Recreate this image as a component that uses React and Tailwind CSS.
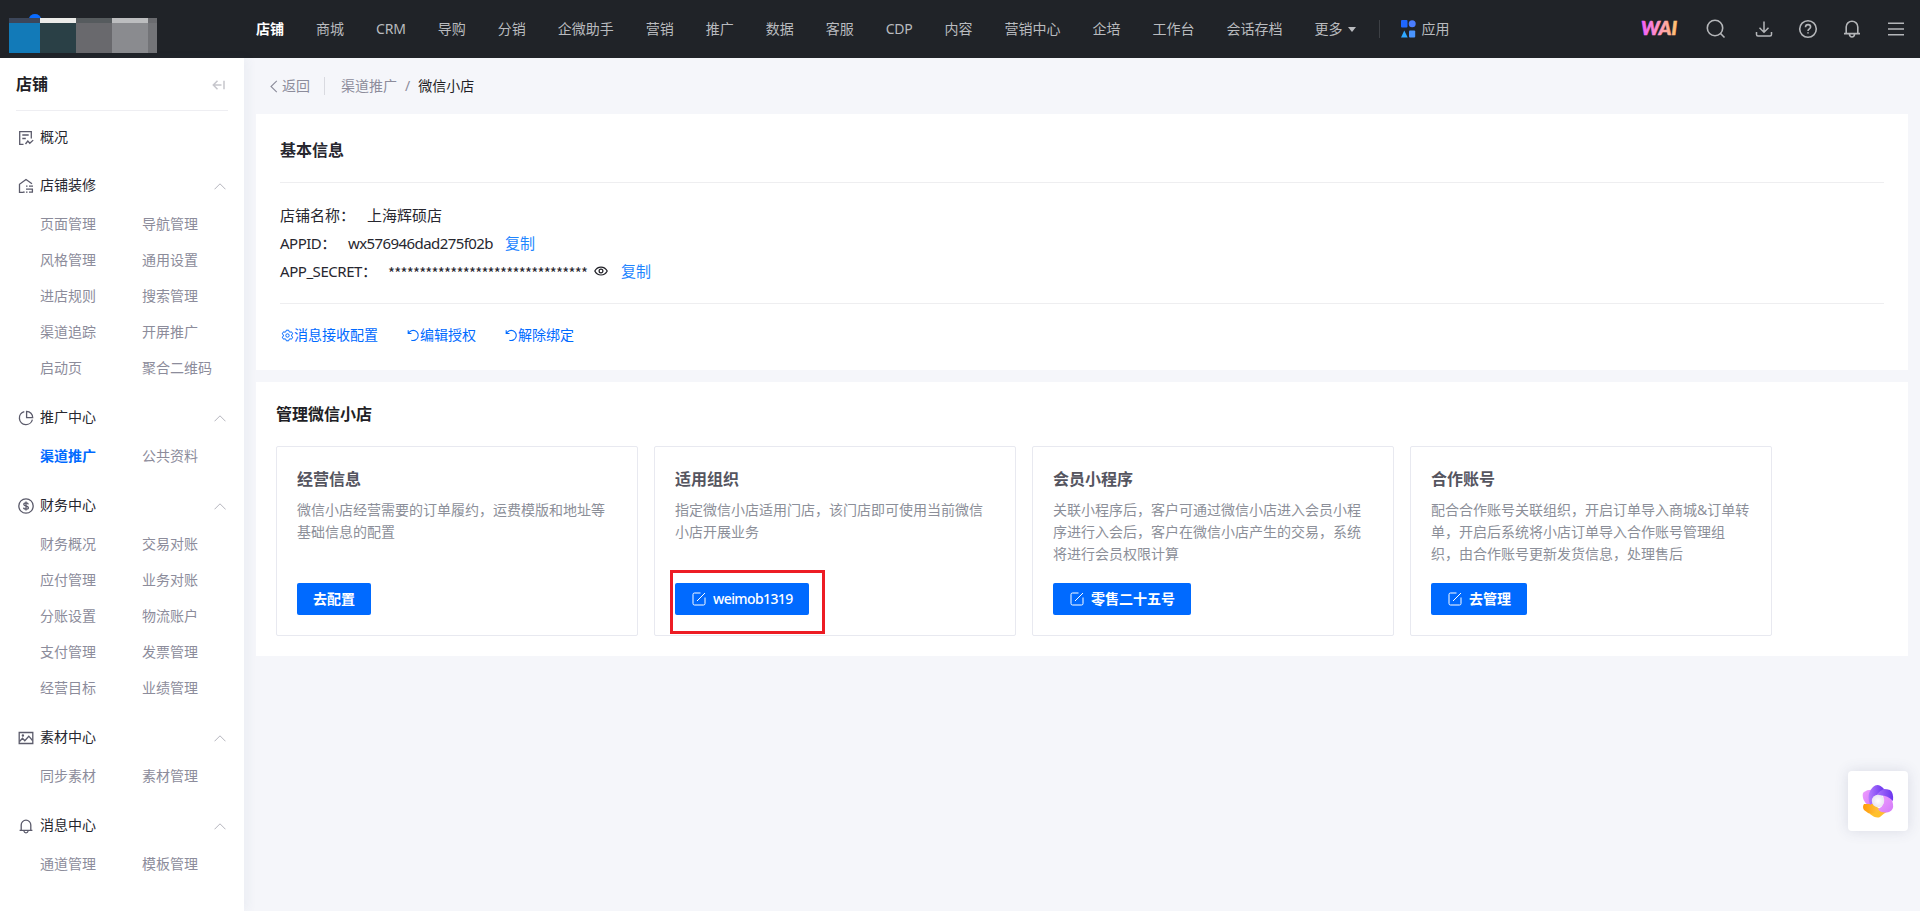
const navItems = [
  "商城",
  "CRM",
  "导购",
  "分销",
  "企微助手",
  "营销",
  "推广",
  "数据",
  "客服",
  "CDP",
  "内容",
  "营销中心",
  "企培",
  "工作台",
  "会话存档",
]

const OverviewIcon = () => (
  <svg width="16" height="16" viewBox="0 0 16 16" fill="none" stroke="#5b5b6b" strokeWidth="1.3">
    <path d="M5.5 14.3H1.7V1.7h11.6v6.8M4.3 5h6.4M4.3 8.5h3.5" />
    <path d="M7.5 14l2.3-3 2 2.3 3.4-3.2" />
  </svg>
)

const HouseIcon = () => (
  <svg width="16" height="16" viewBox="0 0 16 16" fill="none" stroke="#5b5b6b" strokeWidth="1.3">
    <path d="M5.5 14.3H1.5v-1.8V6.3L8 1.5l6 4.3" />
    <path d="M8 8.2h1.5M11 8.2h4M8 11.2h7M8 14.2h1.5M11 14.2h4M5 14.2h1.7M14.4 11.2v3" />
  </svg>
)

const PieIcon = () => (
  <svg width="16" height="16" viewBox="0 0 16 16" fill="none" stroke="#5b5b6b" strokeWidth="1.3">
    <path d="M6.3 1.6A6.6 6.6 0 1 0 14.4 9.6" />
    <path d="M8.6 1.3v6.4h6.1A6.3 6.3 0 0 0 8.6 1.3z" />
  </svg>
)

const MoneyIcon = () => (
  <svg width="16" height="16" viewBox="0 0 16 16" fill="none" stroke="#5b5b6b" strokeWidth="1.3">
    <circle cx="8" cy="8" r="7.2" />
    <path d="M10.3 6.3C10.1 5.2 9.2 4.9 8 4.9c-1.3 0-2.2.5-2.2 1.5 0 2.2 4.6 1 4.6 3.3 0 1-1 1.5-2.4 1.5-1.3 0-2.3-.5-2.4-1.6M8 3.5v9" />
  </svg>
)

const PictureIcon = () => (
  <svg width="16" height="16" viewBox="0 0 16 16" fill="none" stroke="#5b5b6b" strokeWidth="1.3">
    <path d="M1.2 2.5h13.6v11H1.2z" />
    <path d="M1.5 11.5l3-3.2 2.3 2.5 4-4.6 3.7 4.3" />
    <circle cx="4.9" cy="5.6" r=".6" />
  </svg>
)

const BellIcon = () => (
  <svg width="16" height="16" viewBox="0 0 16 16" fill="none" stroke="#5b5b6b" strokeWidth="1.3">
    <path d="M3.2 12.3V7A4.8 4.8 0 0 1 12.8 7v5.3" />
    <path d="M1.6 12.4h12.8M5.9 13c.2 1.2 1 1.9 2.1 1.9s1.9-.7 2.1-1.9" />
  </svg>
)

const groups = [
  {
    title: "店铺装修",
    icon: HouseIcon,
    items: [
      "页面管理",
      "导航管理",
      "风格管理",
      "通用设置",
      "进店规则",
      "搜索管理",
      "渠道追踪",
      "开屏推广",
      "启动页",
      "聚合二维码",
    ],
  },
  { title: "推广中心", icon: PieIcon, items: ["渠道推广", "公共资料"] },
  {
    title: "财务中心",
    icon: MoneyIcon,
    items: [
      "财务概况",
      "交易对账",
      "应付管理",
      "业务对账",
      "分账设置",
      "物流账户",
      "支付管理",
      "发票管理",
      "经营目标",
      "业绩管理",
    ],
  },
  { title: "素材中心", icon: PictureIcon, items: ["同步素材", "素材管理"] },
  { title: "消息中心", icon: BellIcon, items: ["通道管理", "模板管理"] },
]

const cards = [
  {
    title: "经营信息",
    lines: ["微信小店经营需要的订单履约，运费模版和地址等", "基础信息的配置"],
    button: "去配置",
  },
  {
    title: "适用组织",
    lines: ["指定微信小店适用门店，该门店即可使用当前微信", "小店开展业务"],
    button: "weimob1319",
    editable: true,
    marked: true,
  },
  {
    title: "会员小程序",
    lines: [
      "关联小程序后，客户可通过微信小店进入会员小程",
      "序进行入会后，客户在微信小店产生的交易，系统",
      "将进行会员权限计算",
    ],
    button: "零售二十五号",
    editable: true,
  },
  {
    title: "合作账号",
    lines: [
      "配合合作账号关联组织，开启订单导入商城&订单转",
      "单，开启后系统将小店订单导入合作账号管理组",
      "织，由合作账号更新发货信息，处理售后",
    ],
    button: "去管理",
    editable: true,
  },
]

const Logo = () => (
  <svg width="148" height="39" viewBox="0 0 148 39" shapeRendering="crispEdges">
    <ellipse cx="26" cy="5" rx="6" ry="5" fill="#0a6cff" shapeRendering="auto" />
    <path fill="#3c465a" d="M0 4h31v5H0z" />
    <path fill="#127ab8" d="M0 9h31v30H0z" />
    <path fill="#ebebe9" d="M31 4h36v5H31z" />
    <path fill="#2a4046" d="M31 9h36v30H31z" />
    <path fill="#565b5e" d="M67 4h36v5H67z" />
    <path fill="#69696d" d="M67 9h36v30H67z" />
    <path fill="#bcbdbf" d="M103 4h36v5h-36z" />
    <path fill="#8a8b8f" d="M103 9h36v30h-36z" />
    <path fill="#6a6b6f" d="M139 4h9v5h-9z" />
    <path fill="#737478" d="M139 9h9v30h-9z" />
  </svg>
)

const Header = () => (
  <header className="flex h-[58px] shrink-0 items-center bg-[#202328] pr-4 pl-[9px] text-sm text-[#b9bbbf]">
    <div className="mt-[9px] w-[247px]">
      <Logo />
    </div>
    <nav className="flex items-center gap-8 whitespace-nowrap">
      <span className="font-bold text-white">店铺</span>
      {navItems.map((item) => (
        <span key={item} className={/[A-Z]/.test(item) ? "tracking-[-0.2px]" : ""}>
          {item}
        </span>
      ))}
      <span className="flex items-center gap-[5px]">
        更多
        <svg width="8" height="5" viewBox="0 0 8 5" fill="#b9bbbf">
          <path d="M0 0h8L4 5z" />
        </svg>
      </span>
    </nav>
    <div className="ml-[23px] h-[18px] w-px bg-[#3d4045]" />
    <div className="ml-[21px] flex items-center gap-1.5">
      <svg width="15" height="18" viewBox="0 0 15 18">
        <rect x="0" y="0" width="6.5" height="7.5" rx="1" fill="#1f66ff" />
        <circle cx="11.2" cy="3.8" r="3.5" fill="#4a7dff" />
        <path d="M3.3 10.5l3.4 7H0z" fill="#2fa8ff" />
        <rect x="8" y="10.5" width="6.2" height="7" rx="1" fill="#4a95ff" />
      </svg>
      应用
    </div>
    <div className="ml-auto flex items-center">
      <svg width="44" height="24" viewBox="0 0 44 24" className="mr-[22px] mb-0.5">
        <defs>
          <linearGradient id="wai" x1="0" y1="0" x2="1" y2="0">
            <stop offset="0" stopColor="#f25cff" />
            <stop offset=".5" stopColor="#ff9ac0" />
            <stop offset="1" stopColor="#ffc46a" />
          </linearGradient>
        </defs>
        <text
          x="1"
          y="19"
          textLength="36"
          lengthAdjust="spacingAndGlyphs"
          fill="url(#wai)"
          stroke="url(#wai)"
          strokeWidth=".6"
          className="font-['Lato'] text-[19px] font-black italic"
        >
          WAI
        </text>
      </svg>
      <svg width="20" height="20" viewBox="0 0 20 20" fill="none" stroke="#b4b6b9" strokeWidth="1.6">
        <circle cx="9" cy="9" r="7.7" />
        <path d="M14.3 14.3l4.2 4.2" />
      </svg>
      <svg className="ml-7" width="20" height="20" viewBox="0 0 20 20" fill="none" stroke="#b4b6b9" strokeWidth="1.5">
        <path d="M2.5 13v2.5q0 1.5 1.5 1.5h12q1.5 0 1.5-1.5V13M10 2.5V13M5.5 8.7l4.5 4.5 4.5-4.5" />
      </svg>
      <svg className="ml-6" width="20" height="20" viewBox="0 0 20 20" fill="none" stroke="#b4b6b9" strokeWidth="1.6">
        <circle cx="10" cy="10" r="8.3" />
        <path d="M7.5 8.2c0-3.6 5.1-3.3 5.1-.3 0 1.9-2.6 1.9-2.6 4M10 13.2v1.4" />
      </svg>
      <svg className="ml-6" width="20" height="20" viewBox="0 0 20 20" fill="none" stroke="#b4b6b9" strokeWidth="1.6">
        <path d="M4.2 14.5V8a5.8 5.8 0 0 1 11.6 0v6.5M2 14.6h16M7.4 15c.2 1.9 1.2 3 2.6 3s2.4-1.1 2.6-3" />
      </svg>
      <svg className="ml-[26px]" width="16" height="16" viewBox="0 0 16 16" stroke="#b4b6b9" strokeWidth="1.6">
        <path d="M0 2.3h16M0 8h16M0 13.7h16" />
      </svg>
    </div>
  </header>
)

const SidebarGroup = ({ group }) => {
  const Icon = group.icon
  return (
    <div className="mb-3">
      <div className="flex h-10 items-center pr-[18px] pl-[18px]">
        <Icon />
        <span className="ml-1.5 flex-1 pb-0.5 text-[#27272f]">{group.title}</span>
        <svg width="12" height="7" viewBox="0 0 12 7" fill="none" stroke="#b5b5bd">
          <path d="M.5 6.3L6 .8l5.5 5.5" />
        </svg>
      </div>
      <div className="grid grid-cols-[102px_102px] pl-10">
        {group.items.map((item) => (
          <span
            key={item}
            className={
              item === "渠道推广"
                ? "h-9 leading-[35px] font-bold text-[#006aff]"
                : "h-9 leading-[35px] text-[#8c8c9b]"
            }
          >
            {item}
          </span>
        ))}
      </div>
    </div>
  )
}

const Sidebar = () => (
  <aside className="z-10 w-[244px] shrink-0 bg-white text-sm shadow-[4px_0_10px_rgba(60,70,110,0.05)]">
    <div className="mx-4 flex h-[53px] items-center justify-between border-b border-[#eeeef2]">
      <h2 className="text-base font-bold text-[#1f1f26]">店铺</h2>
      <svg className="mt-px mr-[3px]" width="13" height="10" viewBox="0 0 13 10" fill="none" stroke="#c6c6cc" strokeWidth="1.5">
        <path d="M5.5 .8L1.3 5l4.2 4.2M1.5 5h8M12 .8v8.4" />
      </svg>
    </div>
    <div className="mt-[7px] mb-2 flex h-10 items-center pl-[18px]">
      <OverviewIcon />
      <span className="ml-1.5 pb-0.5 text-[#27272f]">概况</span>
    </div>
    {groups.map((group) => (
      <SidebarGroup key={group.title} group={group} />
    ))}
  </aside>
)

const Breadcrumb = () => (
  <div className="flex h-14 items-center pl-[14px] text-sm text-[#8c8c9b]">
    <svg width="8" height="13" viewBox="0 0 8 13" fill="none" stroke="#8c8c9b" strokeWidth="1.1">
      <path d="M6.8 .8L1 6.5l5.8 5.7" />
    </svg>
    <span className="ml-1">返回</span>
    <div className="mr-4 ml-[14px] h-[18px] w-px bg-[#d9dae0]" />
    <span>渠道推广</span>
    <span className="mx-2">/</span>
    <span className="text-[#1f1f26]">微信小店</span>
  </div>
)

const UndoIcon = () => (
  <svg className="mt-px ml-px" width="13" height="13" viewBox="0 0 13 13" fill="none" stroke="#006aff" strokeWidth="1.1">
    <path d="M1.2 1.2v3.3h3.3M1.5 4.3A5.1 5.1 0 1 1 4.3 11.2" />
  </svg>
)

const BasicInfo = () => (
  <section className="h-64 bg-white px-6">
    <h3 className="h-[69px] border-b border-[#eeeef0] pt-6 text-base font-bold text-[#27272f]">
      基本信息
    </h3>
    <div className="flex h-[121px] flex-col justify-center border-b border-[#eeeef0] text-[15px] leading-7 text-[#27272f]">
      <div className="flex">
        <span>店铺名称：</span>
        <span className="ml-3">上海辉硕店</span>
      </div>
      <div className="flex">
        <span className="w-[68px]">
          <span className="tracking-[-0.5px]">APPID</span>：
        </span>
        <span className="w-[157px] whitespace-nowrap tracking-[-0.58px]">wx576946dad275f02b</span>
        <a className="text-[#1e85ff]">复制</a>
      </div>
      <div className="flex h-7 items-center">
        <span className="w-[108px] whitespace-nowrap">
          <span className="tracking-[-0.45px]">APP_SECRET</span>：
        </span>
        <span className="w-[206px] pt-[3px] font-['Noto_Sans_CJK_SC'] text-[15px] leading-7 whitespace-nowrap tracking-[-0.78px]">
          ********************************
        </span>
        <svg width="14" height="10" viewBox="0 0 14 10" fill="none" stroke="#1f1f26" strokeWidth="1.2">
          <path d="M.8 5C3.5-.3 10.5-.3 13.2 5 10.5 10.3 3.5 10.3.8 5z" />
          <circle cx="7" cy="5" r="1.9" />
        </svg>
        <a className="ml-[13px] text-[#1e85ff]">复制</a>
      </div>
    </div>
    <div className="flex h-[62px] items-center gap-7 text-sm text-[#006aff]">
      <a className="flex items-center">
        <svg className="mt-px ml-px" width="13" height="13" viewBox="0 0 13 13" fill="none" stroke="#006aff">
          <path d="M5.3 1.2h2.4l.4 1.5.9.5 1.5-.4 1.2 2-1.1 1.2v1l1.1 1.2-1.2 2-1.5-.4-.9.5-.4 1.5H5.3l-.4-1.5-.9-.5-1.5.4-1.2-2L2.400 7V6L1.300 4.800l1.200-2 1.500.4.9-.5z" />
          <circle cx="6.5" cy="6.5" r="1.7" />
        </svg>
        消息接收配置
      </a>
      <a className="flex items-center">
        <UndoIcon />
        编辑授权
      </a>
      <a className="flex items-center">
        <UndoIcon />
        解除绑定
      </a>
    </div>
  </section>
)

const ManageCard = ({ card }) => (
  <div className="flex h-[190px] w-[362px] flex-col rounded-xs border border-[#e8e9f0] px-5 pt-5 pb-5">
    <h4 className="text-base font-bold text-[#55555f]">{card.title}</h4>
    <div className="mt-2 text-sm leading-[22px] whitespace-nowrap text-[#8c8f99]">
      {card.lines.map((line) => (
        <p key={line}>{line}</p>
      ))}
    </div>
    <div className="relative mt-auto self-start">
      <button className="flex h-8 items-center gap-[7px] rounded-xs bg-[#006aff] px-4 text-sm font-bold text-white">
        {card.editable && (
          <svg className="ml-px" width="14" height="14" viewBox="0 0 14 14" fill="none" stroke="white">
            <path d="M8.5 1H2.5Q1 1 1 2.5v9q0 1.5 1.5 1.5h9q1.5 0 1.5-1.5V5.5M5 9l8-8" />
          </svg>
        )}
        <span className={card.marked ? "font-medium tracking-[-0.6px]" : ""}>{card.button}</span>
      </button>
      {card.marked && (
        <div className="absolute -top-[13px] -left-[5px] h-16 w-[155px] border-3 border-[#ed1c24]" />
      )}
    </div>
  </div>
)

const Assistant = () => (
  <div className="absolute right-3 bottom-20 flex size-[60px] items-center justify-center rounded bg-white shadow-[0_0_14px_rgba(60,70,110,0.15)]">
    <svg width="36" height="36" viewBox="-18 -18 36 36">
      <defs>
        <linearGradient id="violet" x1="0" y1="0" x2="1" y2="0">
          <stop offset="0" stopColor="#b57bff" />
          <stop offset="1" stopColor="#6a35ee" />
        </linearGradient>
        <linearGradient id="pink" x1="0" y1="0" x2="1" y2="1">
          <stop offset="0" stopColor="#f09cff" />
          <stop offset="1" stopColor="#d27af8" />
        </linearGradient>
        <linearGradient id="orange" x1="0" y1="0" x2="1" y2="0">
          <stop offset="0" stopColor="#ff9a0a" />
          <stop offset="1" stopColor="#ffca45" />
        </linearGradient>
        <radialGradient id="core">
          <stop offset="0" stopColor="#ffffff" />
          <stop offset="1" stopColor="#e9e4f2" />
        </radialGradient>
      </defs>
      <path fill="url(#pink)" d="M-14-9Q-10-12-4-11L-4 4-8 5Q-14 2-15-3-16-8-14-9z" />
      <path fill="url(#orange)" d="M-14 3L-5 3 3 9-5 14Q-11 12-14 9-16 6-14 3z" />
      <path fill="#ffc02c" d="M-8 13Q2 12 6 3L10 10Q5 13 2 16-2 18-8 13z" />
      <path fill="url(#pink)" d="M5-6Q14-7 15 3 16 9 11 11 3 13 0 8 8 5 5-6z" />
      <path fill="url(#violet)" d="M-4-9Q4-14 12-11 16-8 15 0 8-7-1-5z" />
      <path fill="url(#violet)" d="M-8 4Q-12-7-5-14 0-19 6-12-2-9-4 1z" />
      <circle r="6.2" fill="url(#core)" />
    </svg>
  </div>
)

export default function App() {
  return (
    <div className="relative flex h-[911px] w-[1920px] flex-col overflow-hidden bg-[#f5f6fa] font-['Noto_Sans','Noto_Sans_CJK_SC',sans-serif]">
      <Header />
      <div className="flex flex-1">
        <Sidebar />
        <main className="flex-1 pr-3 pl-3">
          <Breadcrumb />
          <BasicInfo />
          <section className="mt-3 h-[274px] bg-white px-5 pt-5">
            <h3 className="text-base font-bold text-[#1f1f26]">管理微信小店</h3>
            <div className="mt-5 flex gap-4">
              {cards.map((card) => (
                <ManageCard key={card.title} card={card} />
              ))}
            </div>
          </section>
        </main>
      </div>
      <Assistant />
    </div>
  )
}
